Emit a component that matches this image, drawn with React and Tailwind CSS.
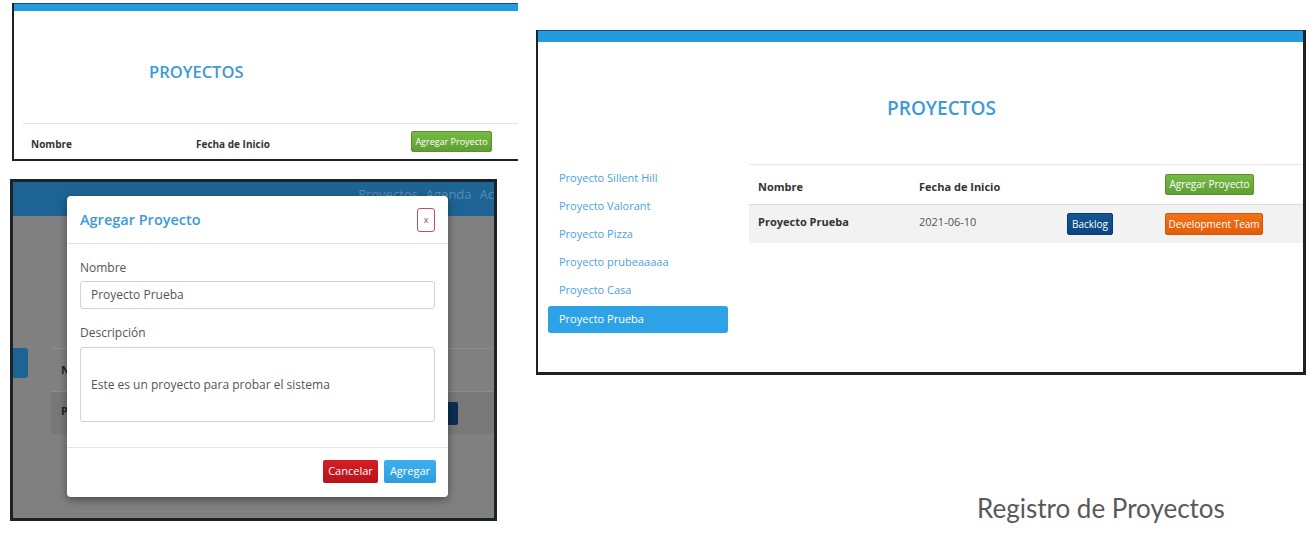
const sideItems = [
  "Proyecto Sillent Hill",
  "Proyecto Valorant",
  "Proyecto Pizza",
  "Proyecto prubeaaaaa",
  "Proyecto Casa",
];

function GreenButton({ className = "" }) {
  return (
    <button
      className={`flex items-center justify-center rounded-[2px] border border-[#5b922f] bg-gradient-to-b from-[#76bb45] to-[#5f9f33] text-white leading-none ${className}`}
    >
      Agregar Proyecto
    </button>
  );
}

/* ========== SHOT 1: tabla vacia ========== */
function ShotTable() {
  return (
    <div className="absolute left-[12px] top-[3px] w-[506px] h-[158px] overflow-hidden border-b-2 border-l-2 border-[#1b2228] bg-white">
      <div className="h-[8px] border-t border-[#1a4f77] bg-[#229be0]" />
      <div className="h-[112px] pt-[50px]">
        <h1 className="ml-[135px] text-[16.5px] font-semibold leading-[22px] text-[#3c9ad8]">
          PROYECTOS
        </h1>
      </div>
      <div className="ml-[9px] flex border-t border-[#e4e4e4] pt-[7px]">
        <span className="mt-[6px] w-[173px] pl-[8px] text-[10px] font-bold leading-[14px] text-[#333]">
          Nombre
        </span>
        <span className="mt-[6px] w-[215px] text-[10px] font-bold leading-[14px] text-[#333]">
          Fecha de Inicio
        </span>
        <GreenButton className="h-[21px] w-[81px] text-[9px]" />
      </div>
    </div>
  );
}

/* ========== SHOT 2: modal ========== */
function ShotModal() {
  return (
    <div className="absolute left-[10px] top-[179px] w-[487px] h-[342px] overflow-hidden border-[3px] border-[#1b2228] bg-[#808080]">
      <div className="relative h-full">
        {/* fondo oscurecido */}
        <div className="flex h-[34px] items-center justify-end gap-[8px] bg-[#1d6494] text-[13px] text-[#5a8cb2]">
          <span className="-mt-[8px]">Proyectos</span>
          <span className="-mt-[8px]">Agenda</span>
          <span className="-mt-[8px]">Ac</span>
        </div>
        <div className="flex pt-[132px]">
          <div className="h-[30px] w-[15px] rounded-r-[3px] bg-[#1d6494]" />
          <div className="ml-[23px] flex-1">
            <div className="flex h-[43px] items-center border-t border-[#8c8c8c] pl-[10px] text-[11px] font-bold text-[#222]">
              N
            </div>
            <div className="flex h-[43px] items-center justify-between border-t border-[#8c8c8c] bg-[#787878] pl-[10px] text-[11px] font-bold text-[#222]">
              <span className="-mt-[4px]">P</span>
              <div className="mr-[36px] h-[23px] w-[20px] rounded-[2px] bg-[#0b2f52]" />
            </div>
          </div>
        </div>

        <div className="absolute left-[54px] top-[14px] w-[381px] h-[301px] rounded-[4px] bg-white shadow-[0_3px_9px_rgba(0,0,0,0.4)]">
          <div className="flex h-[48px] items-center justify-between border-b border-[#e5e5e5] px-[13px]">
            <h2 className="text-[14.5px] font-semibold text-[#3c9ad8]">Agregar Proyecto</h2>
            <button className="flex h-[24px] w-[18px] items-center justify-center rounded-[3px] border border-[#c0505c] text-[9px] leading-none text-[#b23a48]">
              x
            </button>
          </div>
          <div className="px-[13px] pt-[16px] pb-[25px]">
            <label className="block text-[12px] leading-[16px] text-[#555]">Nombre</label>
            <div className="mt-[5px] flex h-[28px] items-center rounded-[3px] border border-[#d2d2d2] px-[10px] text-[12px] text-[#555]">
              Proyecto Prueba
            </div>
            <label className="mt-[16px] block text-[12px] leading-[16px] text-[#555]">Descripción</label>
            <div className="mt-[6px] flex h-[75px] items-center rounded-[3px] border border-[#d2d2d2] px-[10px] text-[12px] text-[#555]">
              Este es un proyecto para probar el sistema
            </div>
          </div>
          <div className="flex justify-end gap-[6px] border-t border-[#e5e5e5] px-[12px] pt-[12px]">
            <button className="flex h-[23px] w-[55px] items-center justify-center rounded-[2px] bg-gradient-to-b from-[#d61e26] to-[#b9131a] text-[11px] text-white">
              Cancelar
            </button>
            <button className="flex h-[23px] w-[52px] items-center justify-center rounded-[2px] bg-gradient-to-b from-[#3eafee] to-[#2c9ede] text-[11px] text-white">
              Agregar
            </button>
          </div>
        </div>
      </div>
    </div>
  );
}

/* ========== SHOT 3: listado ========== */
function ShotList() {
  return (
    <div className="absolute left-[536px] top-[30px] w-[770px] h-[345px] overflow-hidden border-b-[3px] border-l-2 border-r-[3px] border-[#1b2228] bg-white">
      <div className="h-[12px] border-t border-[#1a4f77] bg-[#229be0]" />
      <div className="h-[122px] pt-[53px] pl-[42px] text-center">
        <h1 className="text-[19px] font-semibold leading-[26px] text-[#3c9ad8]">PROYECTOS</h1>
      </div>
      <div className="flex">
        {/* SIDEBAR */}
        <div className="ml-[10px] w-[180px]">
          {sideItems.map((item) => (
            <div
              key={item}
              className="flex h-[28px] items-center pl-[11px] text-[11px] text-[#4aa2dd]"
            >
              {item}
            </div>
          ))}
          <div className="mt-[2px] flex h-[27px] items-center rounded-[3px] bg-[#2ea2e6] pl-[11px] text-[11px] text-white">
            Proyecto Prueba
          </div>
        </div>

        {/* TABLE */}
        <div className="ml-[21px] flex-1">
          <div className="flex h-[40px] items-center border-t border-[#e6e6e6] pl-[9px]">
            <span className="w-[161px] pt-[6px] text-[11px] font-bold text-[#333]">Nombre</span>
            <span className="w-[246px] pt-[6px] text-[11px] font-bold text-[#333]">Fecha de Inicio</span>
            <GreenButton className="-mt-[1px] h-[21px] w-[89px] text-[10px]" />
          </div>
          <div className="flex h-[39px] items-center border-t border-[#dcdcdc] bg-[#f2f2f2] pl-[9px]">
            <span className="w-[161px] pb-[3px] text-[11px] font-bold text-[#333]">Proyecto Prueba</span>
            <span className="w-[148px] pb-[3px] text-[11px] text-[#555]">2021-06-10</span>
            <div className="w-[98px]">
              <button className="flex h-[22px] w-[46px] items-center justify-center rounded-[2px] border border-[#0a3b6c] bg-gradient-to-b from-[#145594] to-[#0c467f] text-[10px] text-white">
                Backlog
              </button>
            </div>
            <button className="flex h-[22px] w-[98px] items-center justify-center rounded-[2px] border border-[#d85806] bg-gradient-to-b from-[#f27219] to-[#e25d07] text-[10px] text-white">
              Development Team
            </button>
          </div>
        </div>
      </div>
    </div>
  );
}

export default function App() {
  return (
    <div className="relative h-[549px] w-[1315px] overflow-hidden bg-white font-['Open_Sans',sans-serif]">
      <ShotTable />
      <ShotModal />
      <ShotList />
      <p className="absolute left-[977px] top-[492px] font-['Lato',sans-serif] text-[26px] leading-[32px] text-[#595959]">
        Registro de Proyectos
      </p>
    </div>
  );
}
